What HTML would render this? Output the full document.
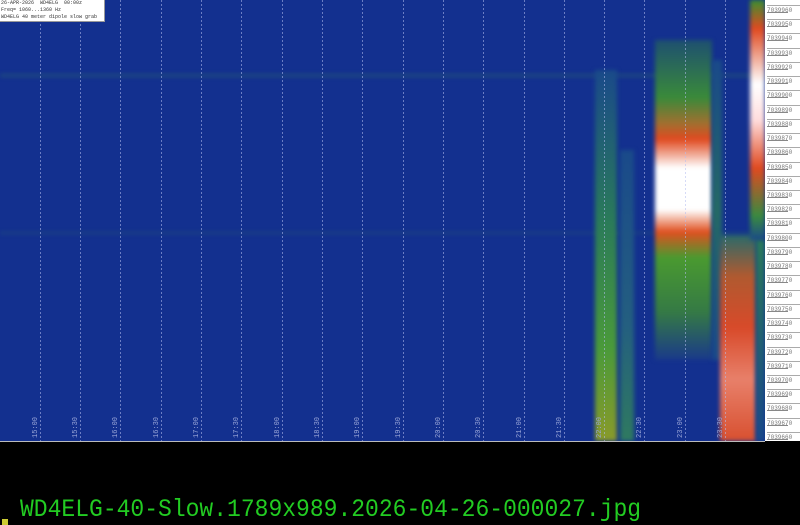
<!DOCTYPE html>
<html><head><meta charset="utf-8"><style>
body{margin:0;width:800px;height:525px;background:#000;overflow:hidden;position:relative}
.a{position:absolute}
#wf{left:0;top:0;width:765px;height:441px;background:#13308f;overflow:hidden}
.vl{position:absolute;top:0;width:1px;height:441px;background:repeating-linear-gradient(rgba(180,190,240,.55) 0 2px,transparent 2px 4px)}
.b{position:absolute;filter:blur(2px)}
#ax{left:765px;top:0;width:35px;height:441px;background:#fff;font:6px "Liberation Mono",monospace;color:#777}
#ax div{position:absolute;left:2px}
.tk{position:absolute;left:14px;width:21px;height:1px;background:#888}
.tl{position:absolute;bottom:3px;font:7px "Liberation Mono",monospace;color:#9aa6d8;transform:rotate(-90deg);transform-origin:left bottom;width:20px}
</style></head><body>
<div id="wf" class="a">
<div class="b" style="left:0;top:74px;width:765px;height:3px;background:rgba(60,140,90,.3)"></div>
<div class="b" style="left:0;top:232px;width:765px;height:2px;background:rgba(60,140,90,.25)"></div>
<div class="b" style="left:595px;top:70px;width:22px;height:371px;background:linear-gradient(#1a4a8a,#2a7a5a 40%,#4a9a3a 75%,#8a9a2a)"></div>
<div class="b" style="left:620px;top:150px;width:14px;height:291px;background:linear-gradient(#1a4a8a,#245f80 60%,#2f7a60)"></div>
<div class="b" style="left:655px;top:40px;width:57px;height:320px;background:linear-gradient(#1e5070,#3a8a3a 18%,#a07030 26%,#e04a20 31%,#fff 40%,#fff 53%,#e05020 60%,#4a9a30 68%,#357a45 85%,#1a3a8a)"></div>
<div class="b" style="left:712px;top:60px;width:10px;height:300px;background:linear-gradient(#1a4a8a,#256a65 50%,#1a4a8a)"></div>
<div class="b" style="left:720px;top:235px;width:36px;height:206px;background:linear-gradient(#2a6a6a,#b05a30 20%,#d84a2a 45%,#e8806a 70%,#d85030)"></div>
<div class="b" style="left:750px;top:0;width:15px;height:240px;background:linear-gradient(#3a9030,#e04a20 12%,#fff 35%,#ffdddd 50%,#e04a20 70%,#3a8a40 90%,#1a4a8a)"></div>
<div class="b" style="left:756px;top:240px;width:9px;height:201px;background:linear-gradient(#2a7a5a,#1a4a8a)"></div>
<div class="vl" style="left:40px"></div><div class="vl" style="left:80px"></div><div class="vl" style="left:120px"></div><div class="vl" style="left:161px"></div><div class="vl" style="left:201px"></div><div class="vl" style="left:241px"></div><div class="vl" style="left:282px"></div><div class="vl" style="left:322px"></div><div class="vl" style="left:362px"></div><div class="vl" style="left:403px"></div><div class="vl" style="left:443px"></div><div class="vl" style="left:483px"></div><div class="vl" style="left:524px"></div><div class="vl" style="left:564px"></div><div class="vl" style="left:604px"></div><div class="vl" style="left:644px"></div><div class="vl" style="left:685px"></div><div class="vl" style="left:725px"></div>
<div class="tl" style="left:40px">15:00</div><div class="tl" style="left:80px">15:30</div><div class="tl" style="left:120px">16:00</div><div class="tl" style="left:161px">16:30</div><div class="tl" style="left:201px">17:00</div><div class="tl" style="left:241px">17:30</div><div class="tl" style="left:282px">18:00</div><div class="tl" style="left:322px">18:30</div><div class="tl" style="left:362px">19:00</div><div class="tl" style="left:403px">19:30</div><div class="tl" style="left:443px">20:00</div><div class="tl" style="left:483px">20:30</div><div class="tl" style="left:524px">21:00</div><div class="tl" style="left:564px">21:30</div><div class="tl" style="left:604px">22:00</div><div class="tl" style="left:644px">22:30</div><div class="tl" style="left:685px">23:00</div><div class="tl" style="left:725px">23:30</div>
<div class="a" style="left:0;top:0;width:103px;height:21px;background:#fff;border-right:1px solid #999;border-bottom:1px solid #999;font:5px/7px 'Liberation Mono',monospace;color:#333;white-space:pre;padding-left:1px">26-APR-2026  WD4ELG  00:00z
Freq= 1060...1360 Hz
WD4ELG 40 meter dipole slow grab</div>
</div>
<div class="a" style="left:0;top:441px;width:765px;height:1px;background:#bbb"></div>
<div id="ax" class="a">
<script>
var s='';for(var i=0;i<31;i++){var y=11+i*14.23;s+='<div style="top:'+(y-4)+'px">'+(7039960-i*10)+'</div><div class="tk" style="top:'+(y+1)+'px"></div><div class="tk" style="left:2px;width:33px;top:'+(y-6)+'px;background:#aaa"></div>';}document.write(s);
</script>
</div>
<div class="a" style="left:20px;top:495px;font:23px 'Liberation Mono',monospace;color:#22cc22;white-space:pre;transform:scaleY(1.1);transform-origin:left top">WD4ELG-40-Slow.1789x989.2026-04-26-000027.jpg</div>
<div class="a" style="left:2px;top:519px;width:6px;height:6px;background:#cc3"></div>
</body></html>
